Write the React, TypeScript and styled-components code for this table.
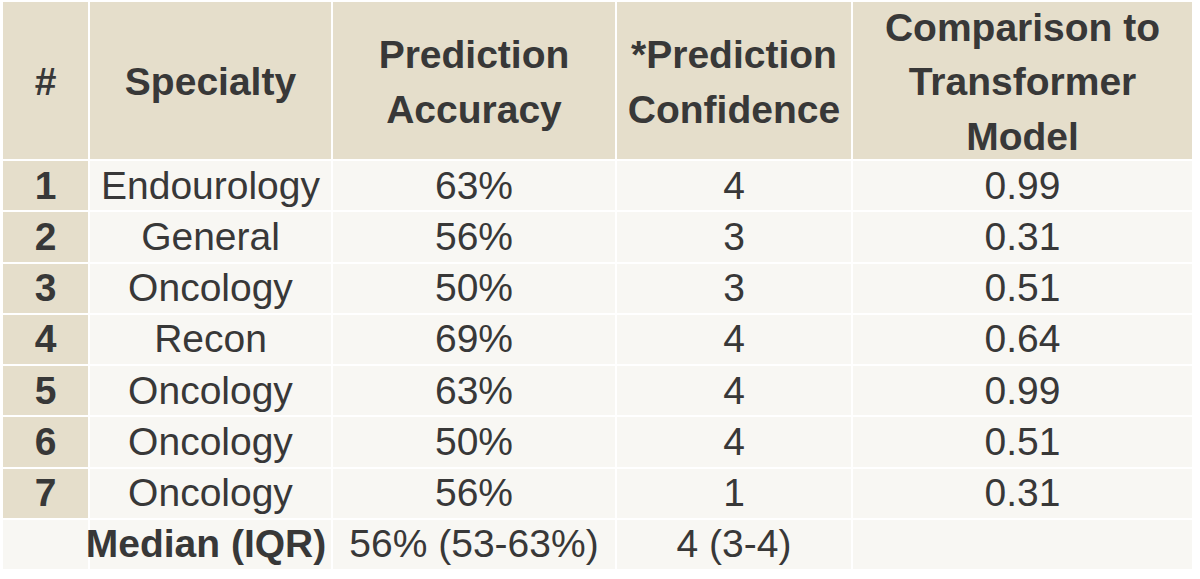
import React from 'react';
import styled, { createGlobalStyle } from 'styled-components';

interface Row {
  id: string;
  specialty: string;
  accuracy: string;
  confidence: string;
  comparison: string;
}

const rows: Row[] = [
  { id: '1', specialty: 'Endourology', accuracy: '63%', confidence: '4', comparison: '0.99' },
  { id: '2', specialty: 'General', accuracy: '56%', confidence: '3', comparison: '0.31' },
  { id: '3', specialty: 'Oncology', accuracy: '50%', confidence: '3', comparison: '0.51' },
  { id: '4', specialty: 'Recon', accuracy: '69%', confidence: '4', comparison: '0.64' },
  { id: '5', specialty: 'Oncology', accuracy: '63%', confidence: '4', comparison: '0.99' },
  { id: '6', specialty: 'Oncology', accuracy: '50%', confidence: '4', comparison: '0.51' },
  { id: '7', specialty: 'Oncology', accuracy: '56%', confidence: '1', comparison: '0.31' },
];

const headers = [
  ['#'],
  ['Specialty'],
  ['Prediction', 'Accuracy'],
  ['*Prediction', 'Confidence'],
  ['Comparison to', 'Transformer', 'Model'],
];

const App: React.FC = () => {
  return (
    <Page>
      <GlobalStyle />
      <Table>
        {headers.map((lines, i) => (
          <HeadCell key={i}>
            <HeadText>
              {lines.map((l, j) => (
                <div key={j}>{l}</div>
              ))}
            </HeadText>
          </HeadCell>
        ))}
        {rows.map(r => (
          <React.Fragment key={r.id}>
            <IndexCell>{r.id}</IndexCell>
            <Cell>{r.specialty}</Cell>
            <Cell>{r.accuracy}</Cell>
            <Cell>{r.confidence}</Cell>
            <Cell>{r.comparison}</Cell>
          </React.Fragment>
        ))}
        <Cell />
        <Cell $bold $shift>
          Median (IQR)
        </Cell>
        <Cell>56% (53-63%)</Cell>
        <Cell>4 (3-4)</Cell>
        <Cell />
      </Table>
    </Page>
  );
};

export default App;

const GlobalStyle = createGlobalStyle`
  html, body {
    margin: 0;
    padding: 0;
    background: #ffffff;
  }
  body {
    font-family: "Liberation Sans", Arial, Helvetica, sans-serif;
    color: #383838;
  }
`;

const Page = styled.div`
  width: 1200px;
  height: 579px;
  padding: 2px 0 0 3px;
  box-sizing: border-box;
  overflow: hidden;
`;

const Table = styled.div`
  display: grid;
  grid-template-columns: 85px 241px 282px 234px 339px;
  grid-template-rows: 157px repeat(8, 49.25px);
  gap: 2px;
  width: 1189px;
  background: #ffffff;
`;

const HeadCell = styled.div`
  display: flex;
  align-items: center;
  justify-content: center;
  background: #e5decb;
  padding-top: 4px;
  box-sizing: border-box;
  min-height: 0;
`;

const HeadText = styled.div`
  font-size: 39px;
  font-weight: 700;
  line-height: 54.5px;
  text-align: center;
  white-space: nowrap;
`;

const IndexCell = styled.div`
  display: flex;
  align-items: center;
  justify-content: center;
  background: #e5decb;
  font-size: 39px;
  font-weight: 700;
`;

const Cell = styled.div<{ $bold?: boolean; $shift?: boolean }>`
  display: flex;
  align-items: center;
  justify-content: center;
  background: #f8f7f3;
  font-weight: ${p => (p.$bold ? 700 : 400)};
  font-size: 39px;
  white-space: nowrap;
  padding-right: ${p => (p.$shift ? '9px' : '0')};
  min-width: 0;
`;
